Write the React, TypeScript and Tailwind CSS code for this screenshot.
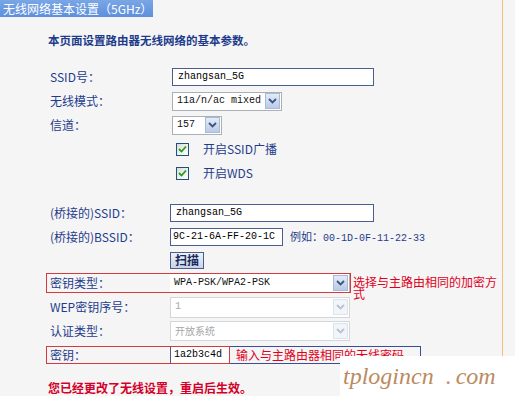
import React from "react";

const cjk = "font-['Noto_Sans_CJK_SC','Liberation_Sans',sans-serif]";
const mono = "font-['Liberation_Mono','Noto_Sans_CJK_SC',monospace]";

function Chevron({ disabled }: { disabled?: boolean }) {
  return (
    <svg width="9" height="6" viewBox="0 0 9 6">
      <path
        d="M1 1 L4.5 4.5 L8 1"
        fill="none"
        stroke={disabled ? "#b9c2cf" : "#3d5482"}
        strokeWidth="1.8"
      />
    </svg>
  );
}

function Select({
  value,
  className,
  disabled,
  textClass = mono,
}: {
  value: string;
  className: string;
  disabled?: boolean;
  textClass?: string;
}) {
  return (
    <div
      className={`flex items-center justify-between border bg-white pl-[4px] pr-[1px] ${className} ${
        disabled ? "border-[#d3d6da] text-[#a8a8a8]" : "border-[#a9b0b8] text-[#111]"
      }`}
    >
      <span className={`${textClass} text-[10px] leading-none`}>{value}</span>
      <span
        className={`flex h-[16px] w-[15px] items-center justify-center border ${
          disabled
            ? "border-[#dde3ea] bg-[#f1f4f8]"
            : "border-[#a9b9d6] bg-gradient-to-b from-[#e3ebf7] to-[#b9cbe8]"
        }`}
      >
        <Chevron disabled={disabled} />
      </span>
    </div>
  );
}

function Checkbox() {
  return (
    <span className="flex h-[13px] w-[13px] items-center justify-center border border-[#1c5180] bg-gradient-to-br from-[#dcdcd6] to-white">
      <svg width="9" height="8" viewBox="0 0 9 8">
        <path d="M1 4 L3.5 6.5 L8 1.5" fill="none" stroke="#21a121" strokeWidth="1.8" />
      </svg>
    </span>
  );
}

function Row({
  label,
  children,
  labelWidth = "w-[172px]",
}: {
  label?: string;
  children: React.ReactNode;
  labelWidth?: string;
}) {
  return (
    <div className="flex h-[24px] items-center">
      <div className={`${labelWidth} shrink-0 pl-[50px] text-[12px] text-[#1f3c8c]`}>{label}</div>
      <div className="flex items-center">{children}</div>
    </div>
  );
}

export default function App() {
  return (
    <div className={`relative h-[396px] w-[515px] overflow-hidden bg-[#f5f5f5] ${cjk}`}>
      <div className="h-full w-[503px] border-r border-[#f2c07c]">
        <div className="flex h-[17px] w-[153px] items-center bg-gradient-to-b from-[#7aa6e6] to-[#5d8fdc] pl-[3px] text-[12px] leading-none text-white">
          无线网络基本设置（5GHz）
        </div>

        <div className="mt-[15px] h-[16px] pl-[48px] text-[11.5px] font-semibold leading-[16px] text-[#1f3c8c]">
          本页面设置路由器无线网络的基本参数。
        </div>

        <div className="mt-[17px]">
          <Row label="SSID号：">
            <div className="flex h-[18px] w-[202px] items-center border border-[#4b5c8f] bg-white pl-[5px]">
              <span className={`${mono} text-[10px] leading-none text-[#000]`}>zhangsan_5G</span>
            </div>
          </Row>
          <Row label="无线模式：">
            <Select value="11a/n/ac mixed" className="h-[19px] w-[110px]" />
          </Row>
          <Row label="信道：">
            <Select value="157" className="h-[19px] w-[50px]" />
          </Row>
          <Row>
            <span className="ml-[4px]">
              <Checkbox />
            </span>
            <span className="ml-[14px] text-[12px] text-[#1f3c8c]">开启SSID广播</span>
          </Row>
          <Row>
            <span className="ml-[4px]">
              <Checkbox />
            </span>
            <span className="ml-[14px] text-[12px] text-[#1f3c8c]">开启WDS</span>
          </Row>
        </div>

        <div className="mt-[16px]">
          <Row label="(桥接的)SSID：" labelWidth="w-[170px]">
            <div className="flex h-[18px] w-[204px] items-center border border-[#4b5c8f] bg-white pl-[5px]">
              <span className={`${mono} text-[10px] leading-none text-[#000]`}>zhangsan_5G</span>
            </div>
          </Row>
          <Row label="(桥接的)BSSID：" labelWidth="w-[170px]">
            <div className="flex h-[18px] w-[113px] items-center border border-[#4b5c8f] bg-white pl-[2px]">
              <span className={`${mono} text-[10px] leading-none text-[#000]`}>9C-21-6A-FF-20-1C</span>
            </div>
            <span className="ml-[7px] text-[11px] text-[#1f3c8c]">
              例如：<span className={`${mono} text-[10px]`}>00-1D-0F-11-22-33</span>
            </span>
          </Row>
          <div className="flex h-[22px] items-center pl-[170px]">
            <button
              type="button"
              className="flex h-[17px] w-[34px] items-center justify-center border border-[#4b5c8f] bg-gradient-to-b from-[#eef1f8] to-[#c9d3e6] text-[12px] font-semibold leading-none text-[#1a2a5a]"
            >
              扫描
            </button>
          </div>

          <div className="flex h-[24px] items-start">
            <div className="ml-[46px] mt-[2px] flex h-[20px] w-[305px] items-center border border-[#d8393f]">
              <div className="w-[123px] shrink-0 pl-[3px] text-[12px] text-[#1f3c8c]">密钥类型：</div>
              <Select value="WPA-PSK/WPA2-PSK" className="h-[18px] w-[180px] border-y-0 border-l-0" />
            </div>
            <div className="ml-[2px] mt-[5px] w-[150px] text-[12px] leading-[12px] text-[#e1001c]">
              选择与主路由相同的加密方式
            </div>
          </div>
          <div className="flex h-[24px] items-center">
            <div className="w-[170px] shrink-0 pl-[50px] text-[12px] text-[#1f3c8c]">WEP密钥序号：</div>
            <Select value="1" disabled className="h-[21px] w-[180px]" />
          </div>
          <div className="flex h-[24px] items-center">
            <div className="w-[170px] shrink-0 pl-[50px] text-[12px] text-[#1f3c8c]">认证类型：</div>
            <Select value="开放系统" disabled className="h-[20px] w-[180px]" textClass={cjk} />
          </div>
          <div className="flex h-[24px] items-center">
            <div className="ml-[46px] flex h-[18px] w-[184px] items-center border border-[#d8393f]">
              <div className="w-[123px] shrink-0 pl-[3px] text-[12px] text-[#1f3c8c]">密钥：</div>
              <div className="flex h-[16px] w-[59px] items-center border-l border-[#4b5c8f] bg-white pl-[3px]">
                <span className={`${mono} text-[10px] leading-none text-[#000]`}>1a2b3c4d</span>
              </div>
            </div>
            <div className="flex h-[18px] w-[191px] items-center border border-l-0 border-[#3b4c9a] pl-[6px] text-[12px] leading-none text-[#e1001c]">
              输入与主路由器相同的无线密码
            </div>
          </div>

          <div className="mt-[13px] pl-[48px] text-[12px] font-semibold leading-[16px] text-[#d4002a]">
            您已经更改了无线设置，重启后生效。
          </div>
        </div>
      </div>

      <div className="absolute left-[340px] top-[356px] flex h-[40px] w-[175px] items-center bg-white pl-[3px]">
        <span className="font-['Liberation_Serif',serif] text-[24px] italic leading-none text-[#bb8b5f]">
          tplogincn<span className="ml-[12px]">.</span>
          <span className="ml-[4px]">com</span>
        </span>
      </div>
    </div>
  );
}
